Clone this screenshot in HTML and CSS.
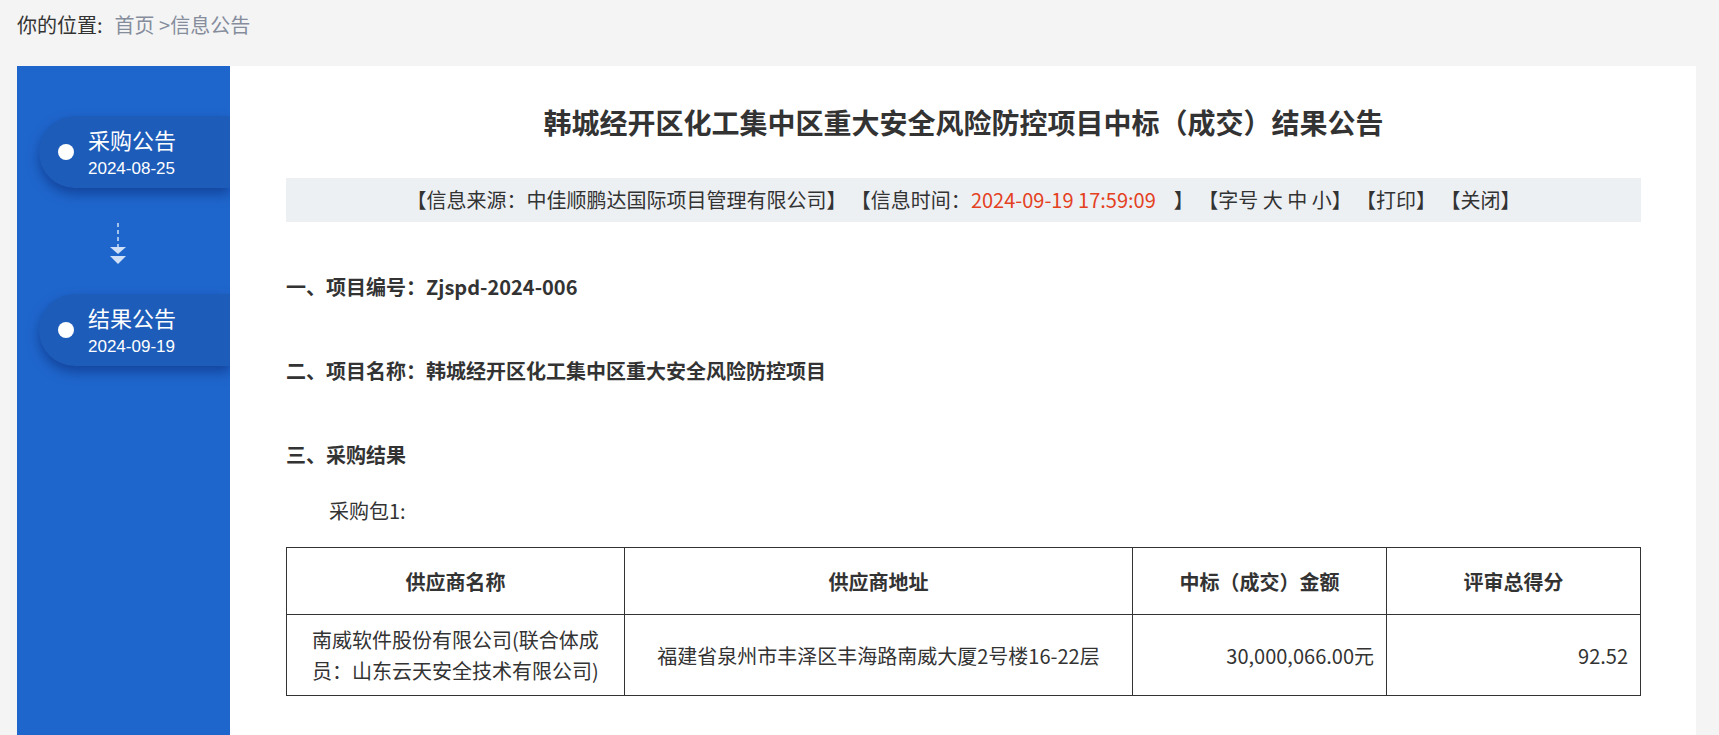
FILE: index.html
```html
<!DOCTYPE html>
<html lang="zh-CN">

<head>
  <meta charset="UTF-8" />
  <meta name="viewport" content="width=device-width, initial-scale=1.0" />
  <title>韩城经开区化工集中区重大安全风险防控项目中标（成交）结果公告</title>
  <link rel="stylesheet" href="styles.css">
</head>

<body>
  <div class="wrap">
    <div class="crumb">你的位置:<span class="path"><a href="#">首页</a> &gt;<a href="#">信息公告</a></span></div>

    <div class="main">
      <!-- 左侧流程 -->
      <div class="side">
        <div class="step">
          <span class="dot"></span>
          <div>
            <div class="step-name">采购公告</div>
            <div class="step-date">2024-08-25</div>
          </div>
        </div>

        <div class="arrow">
          <svg width="20" height="44" viewBox="0 0 20 44">
            <line x1="10" y1="0" x2="10" y2="24" stroke="#cfe0f7" stroke-width="1.5" stroke-dasharray="4 3" />
            <polygon points="2,24 18,24 10,31" fill="#cfe0f7" />
            <polygon points="2,33 18,33 10,41" fill="#cfe0f7" />
          </svg>
        </div>

        <div class="step">
          <span class="dot"></span>
          <div>
            <div class="step-name">结果公告</div>
            <div class="step-date">2024-09-19</div>
          </div>
        </div>
      </div>

      <!-- 公告内容 -->
      <div class="content">
        <h1 class="title">韩城经开区化工集中区重大安全风险防控项目中标（成交）结果公告</h1>

        <div class="info">
          【信息来源：中佳顺鹏达国际项目管理有限公司】 【信息时间：<span class="time">2024-09-19 17:59:09</span>&nbsp;&nbsp;&nbsp;&nbsp;】 【字号 <a href="#">大</a> <a href="#">中</a> <a href="#">小</a>】 【<a href="#">打印</a>】 【<a href="#">关闭</a>】
        </div>

        <p class="sec">一、项目编号：Zjspd-2024-006</p>
        <p class="sec">二、项目名称：韩城经开区化工集中区重大安全风险防控项目</p>
        <p class="sec">三、采购结果</p>
        <p class="pkg">采购包1:</p>

        <table class="result">
          <colgroup>
            <col style="width: 338px">
            <col style="width: 508px">
            <col style="width: 254px">
            <col>
          </colgroup>
          <tr>
            <th>供应商名称</th>
            <th>供应商地址</th>
            <th>中标（成交）金额</th>
            <th>评审总得分</th>
          </tr>
          <tr>
            <td class="name">南威软件股份有限公司(联合体成员：山东云天安全技术有限公司)</td>
            <td class="center">福建省泉州市丰泽区丰海路南威大厦2号楼16-22层</td>
            <td class="num">30,000,066.00元</td>
            <td class="num">92.52</td>
          </tr>
        </table>
      </div>
    </div>
  </div>
</body>

</html>
```

FILE: styles.css
```css
html,
body {
  background: #f4f4f4;
  margin: 0;
  padding: 0;
}

body {
  font-family: "Microsoft YaHei", "Noto Sans CJK SC", sans-serif;
  color: #333;
}

a {
  color: inherit;
  text-decoration: none;
}

.wrap {
  width: 1679px;
  margin-left: 17px;
}

.crumb {
  height: 50px;
  line-height: 50px;
  font-size: 20px;
  margin-bottom: 16px;
}

.crumb .path {
  color: #858d9c;
  margin-left: 12px;
}

.main {
  display: flex;
  min-height: 700px;
}

/* 左侧流程 */
.side {
  width: 213px;
  flex-shrink: 0;
  background: #1f66cc;
  padding-top: 50px;
  box-sizing: border-box;
}

.step {
  display: flex;
  margin-left: 22px;
  height: 72px;
  box-sizing: border-box;
  padding: 9px 0 0 19px;
  border-radius: 36px 0 0 36px;
  background: #1d5cb9;
  box-shadow: 0 6px 12px rgba(8, 36, 110, 0.5);
  color: #fff;
}

.dot {
  width: 16px;
  height: 16px;
  border-radius: 50%;
  background: #fff;
  margin: 19px 14px 0 0;
}

.step-name {
  font-size: 22px;
  line-height: 28px;
}

.step-date {
  font-family: "Liberation Sans", Arial, sans-serif;
  font-size: 17px;
  line-height: 28px;
  margin-top: 2px;
}

.arrow {
  height: 44px;
  margin: 35px 0 27px 91px;
}

.arrow svg {
  display: block;
}

/* 公告内容 */
.content {
  flex: 1;
  background: #fff;
  padding: 36px 55px 40px 56px;
}

.title {
  margin: 0;
  font-size: 28px;
  line-height: 40px;
  text-align: center;
  font-weight: bold;
}

.info {
  margin-top: 36px;
  height: 44px;
  line-height: 44px;
  background: #edf0f3;
  text-align: center;
  font-size: 20px;
}

.info .time {
  color: #e4411f;
}

.sec {
  margin: 54px 0 0;
  font-size: 20px;
  line-height: 30px;
  font-weight: bold;
}

.info + .sec {
  margin-top: 50px;
}

.pkg {
  margin: 26px 0 0;
  padding-left: 43px;
  font-size: 20px;
  line-height: 30px;
}

.result {
  width: 100%;
  margin-top: 21px;
  border-collapse: collapse;
  table-layout: fixed;
  font-size: 20px;
  line-height: 31px;
}

.result th,
.result td {
  border: 1px solid #333;
}

.result th {
  padding: 18px 12px 17px;
  font-weight: bold;
  text-align: center;
}

.result td {
  padding: 9px 12px;
}

.result td.name {
  padding: 9px 20px;
  text-align: center;
}

.result td.center {
  text-align: center;
}

.result td.num {
  text-align: right;
}
```
